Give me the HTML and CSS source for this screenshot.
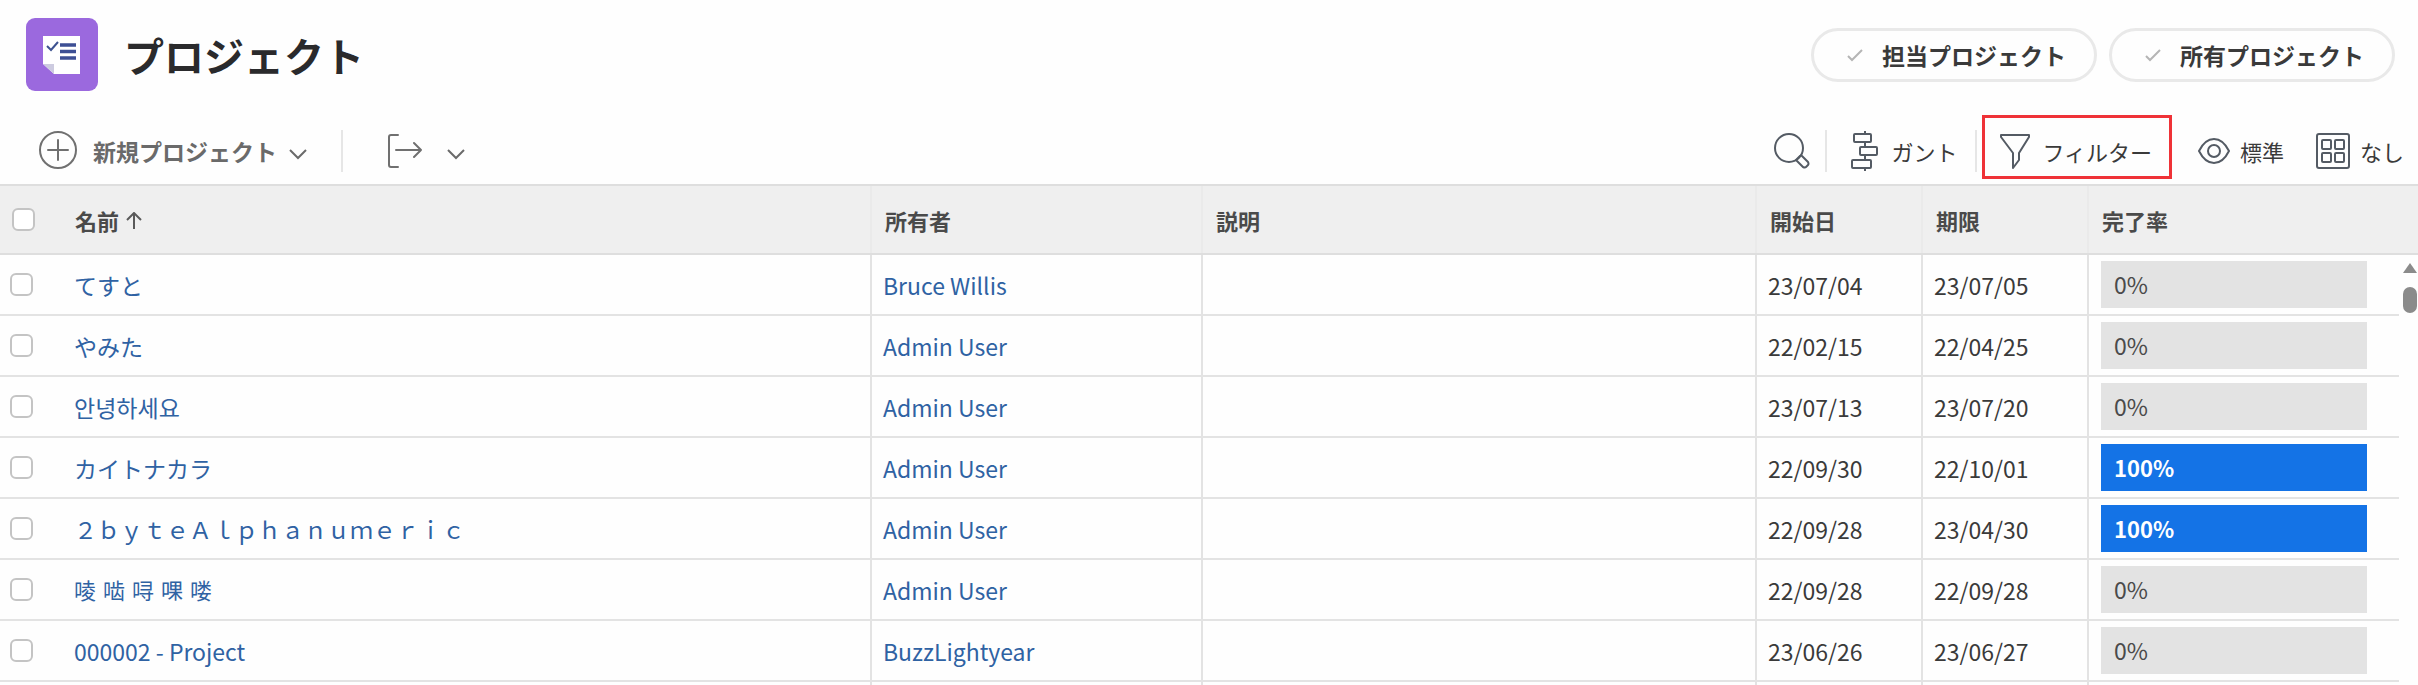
FILE: index.html
```
<!DOCTYPE html>
<html lang="ja">
<head>
<meta charset="utf-8">
<title>プロジェクト</title>
<link rel="stylesheet" href="styles.css">
</head>
<body>
<header class="page-head">
  <svg class="app-icon" viewBox="0 0 72 73" aria-hidden="true">
    <rect width="72" height="73" rx="9" fill="#9b69de"/>
    <path d="M17 18h37v38H28L17 46z" fill="#fff"/>
    <path d="M17 46h11v10z" fill="#cdcbe0"/>
    <path d="M21 28l4 4 7-8" fill="none" stroke="#3d5290" stroke-width="2"/>
    <path d="M34 27h16M34 33.500h16M34 40h16" stroke="#3d4f94" stroke-width="3.500"/>
  </svg>
  <h1 class="title">プロジェクト</h1>
  <div class="pills">
    <button class="pill" type="button"><svg class="tick" viewBox="0 0 16 14"><path d="M1 8l4 4L15 2"/></svg>担当プロジェクト</button>
    <button class="pill" type="button"><svg class="tick" viewBox="0 0 16 14"><path d="M1 8l4 4L15 2"/></svg>所有プロジェクト</button>
  </div>
</header>

<div class="toolbar">
  <button class="tool new" type="button">
    <svg class="icon plus" viewBox="0 0 40 40"><circle cx="20" cy="19" r="18"/><path d="M20 9v20M10 19h20"/></svg>
    新規プロジェクト
    <svg class="chev" viewBox="0 0 20 12"><path d="M2 2l8 8 8-8"/></svg>
  </button>
  <span class="rule"></span>
  <button class="tool export" type="button" aria-label="書き出し">
    <svg class="icon out" viewBox="0 0 36 36"><path d="M12 2H5q-2 0-2 2v28q0 2 2 2h7M10 17h25M28 10l7 7-7 7"/></svg>
    <svg class="chev" viewBox="0 0 20 12"><path d="M2 2l8 8 8-8"/></svg>
  </button>
  <div class="view-tools">
    <button class="tool search" type="button" aria-label="検索">
      <svg class="icon dark" viewBox="0 0 36 36"><circle cx="15" cy="15" r="14"/><path d="M22 27l4-4q1-1 2 0l6 6q1 2 0 3l-2 2q-1 1-3 0l-7-7z"/></svg>
    </button>
    <span class="rule"></span>
    <button class="tool gantt" type="button">
      <svg class="icon dark slim" viewBox="0 0 28 40"><rect x="3" y="3" width="17" height="8" rx="1"/><rect x="9" y="16" width="17" height="8" rx="1"/><rect x="1" y="29" width="19" height="8" rx="1"/><path d="M14 0v3M14 11v5M14 24v5M14 37v3"/></svg>
      ガント
    </button>
    <span class="rule"></span>
    <button class="tool filter" type="button">
      <svg class="icon dark" viewBox="0 0 32 36"><path d="M2 2h28v2L20 20v7l-6 8V20L2 4z"/></svg>
      フィルター
    </button>
    <button class="tool view" type="button">
      <svg class="icon dark" viewBox="0 0 32 28"><path d="M1 14Q7 2 16 2t15 12Q25 26 16 26T1 14z"/><circle cx="16" cy="14" r="6"/></svg>
      標準
    </button>
    <button class="tool group" type="button">
      <svg class="icon dark" viewBox="0 0 34 36"><rect x="1" y="1" width="32" height="34" rx="2"/><rect x="6" y="7" width="9" height="9" rx="1"/><rect x="19" y="7" width="9" height="9" rx="1"/><rect x="6" y="20" width="9" height="9" rx="1"/><rect x="19" y="20" width="9" height="9" rx="1"/></svg>
      なし
    </button>
  </div>
</div>

<table class="grid">
  <colgroup><col class="c-check"><col class="c-name"><col class="c-owner"><col class="c-desc"><col class="c-date"><col class="c-date"><col class="c-done"><col class="c-scroll"></colgroup>
  <thead>
    <tr>
      <th class="check"><input type="checkbox" aria-label="すべて選択"></th>
      <th class="name">名前<svg class="sort" viewBox="0 0 16 18"><path d="M8 17V2M1 8l7-7 7 7"/></svg></th>
      <th>所有者</th><th>説明</th><th>開始日</th><th>期限</th><th class="edge">完了率</th><th class="edge"></th>
    </tr>
  </thead>
  <tbody>
    <tr><td class="check"><input type="checkbox" aria-label="てすと"></td><td class="name"><a href="#">てすと</a></td><td><a href="#">Bruce Willis</a></td><td></td><td>23/07/04</td><td>23/07/05</td><td class="done"><div class="bar">0%</div></td>
      <td class="scroll" rowspan="8"><div class="track"><span class="up"></span><span class="thumb"></span></div></td></tr>
    <tr><td class="check"><input type="checkbox" aria-label="やみた"></td><td class="name"><a href="#">やみた</a></td><td><a href="#">Admin User</a></td><td></td><td>22/02/15</td><td>22/04/25</td><td class="done"><div class="bar">0%</div></td></tr>
    <tr><td class="check"><input type="checkbox" aria-label="안녕하세요"></td><td class="name"><a href="#" lang="ko">안녕하세요</a></td><td><a href="#">Admin User</a></td><td></td><td>23/07/13</td><td>23/07/20</td><td class="done"><div class="bar">0%</div></td></tr>
    <tr><td class="check"><input type="checkbox" aria-label="カイトナカラ"></td><td class="name"><a href="#">カイトナカラ</a></td><td><a href="#">Admin User</a></td><td></td><td>22/09/30</td><td>22/10/01</td><td class="done"><div class="bar full">100%</div></td></tr>
    <tr><td class="check"><input type="checkbox" aria-label="２ｂｙｔｅＡｌｐｈａｎｕｍｅｒｉｃ"></td><td class="name"><a href="#">２ｂｙｔｅＡｌｐｈａｎｕｍｅｒｉｃ</a></td><td><a href="#">Admin User</a></td><td></td><td>22/09/28</td><td>23/04/30</td><td class="done"><div class="bar full">100%</div></td></tr>
    <tr><td class="check"><input type="checkbox" aria-label="㖫 啮 㖊 𠵩 喽"></td><td class="name"><a class="rare" href="#">㖫 啮 㖊 𠵩 喽</a></td><td><a href="#">Admin User</a></td><td></td><td>22/09/28</td><td>22/09/28</td><td class="done"><div class="bar">0%</div></td></tr>
    <tr><td class="check"><input type="checkbox" aria-label="000002 - Project"></td><td class="name"><a href="#">000002 - Project</a></td><td><a href="#">BuzzLightyear</a></td><td></td><td>23/06/26</td><td>23/06/27</td><td class="done"><div class="bar">0%</div></td></tr>
    <tr class="next"><td></td><td></td><td></td><td></td><td></td><td></td><td></td></tr>
  </tbody>
</table>
</body>
</html>
```
FILE: styles.css
```
* { box-sizing: border-box; }

body {
  margin: 0;
  background: #fefefe;
  color: #3a3a3a;
  font: 23px/32px "Noto Sans CJK JP", "Noto Sans CJK KR", "Noto Sans CJK SC", sans-serif;
}

button { font: inherit; color: inherit; background: none; border: 0; padding: 0; white-space: nowrap; }
svg { display: block; flex: none; fill: none; }

.page-head { display: flex; align-items: center; padding: 18px 23px 24px 26px; }
.app-icon { width: 72px; height: 73px; }
.title { margin: 0 0 0 26px; font-size: 40px; line-height: 48px; font-weight: 700; color: #2a2a2c; }

.pills { display: flex; gap: 12px; margin-left: auto; }
.pill {
  display: flex; align-items: center; gap: 19px;
  height: 54px; padding: 0 28px 0 33px;
  border: 3px solid #e9e9e9; border-radius: 27px;
  font-weight: 700;
}
.tick { width: 16px; height: 14px; stroke: #b5b5b5; stroke-width: 2; }

.toolbar { display: flex; align-items: center; height: 69px; padding: 3px 14px 0 38px; }
.tool { display: flex; align-items: center; }
.icon { stroke: #707070; stroke-width: 2; stroke-linejoin: round; stroke-linecap: round; }
.dark { stroke: #545b64; }
.rule { width: 2px; height: 42px; background: #e6e6e6; }
.new { gap: 15px; font-weight: 700; color: #6a6a6a; }
.plus { width: 40px; height: 40px; }
.chev { width: 20px; height: 12px; margin-top: 5px; stroke: #6a6a6a; stroke-width: 2; }
.new .chev { margin-left: -4px; }
.new + .rule { margin: 0 43px 0 33px; }
.out { width: 36px; height: 36px; }
.export { gap: 24px; }

.view-tools { display: flex; align-items: center; margin-left: auto; font-size: 22px; }
.search svg { width: 36px; height: 36px; }
.search + .rule { margin: 0 24px 0 15px; }
.gantt { gap: 12px; margin-right: 18px; }
.slim { width: 28px; height: 40px; }
.filter { position: relative; gap: 11px; margin-left: 22px; }
.filter svg { width: 32px; height: 36px; }
.filter::after {
  content: ""; position: absolute; inset: -18px -20px -10px -17px;
  border: 3px solid #ef3237;
}
.view { gap: 10px; margin: 0 32px 0 46px; }
.view svg { width: 32px; height: 28px; }
.group { gap: 10px; }
.group svg { width: 34px; height: 36px; }

.grid { width: 100%; table-layout: fixed; border-collapse: separate; border-spacing: 0; }
.c-check { width: 60px; }
.c-name { width: 812px; }
.c-owner { width: 331px; }
.c-date { width: 166px; }
.c-done { width: 310px; }
.c-scroll { width: 19px; }

.grid th {
  height: 71px; padding: 0 13px; text-align: left; font-size: 22px; color: #4a4a4a;
  background: #efefef; border: solid #dedede; border-width: 2px 0;
  box-shadow: inset -2px 0 #eaeaea;
}
.grid td { height: 61px; padding: 1px 11px 0; border-bottom: 2px solid #e3e3e3; border-right: 2px solid #e3e3e3; }
.grid .check { padding: 0 0 0 10px; border-right: 0; box-shadow: none; }
.grid th.check { padding-left: 12px; }
.grid .name { padding-left: 14px; }
.grid th.name { padding-left: 15px; }
.grid th.edge { box-shadow: none; }
.grid .done { padding: 0 32px 0 12px; border-right: 0; }
.grid .scroll { padding: 0; border: 0; vertical-align: top; }
.grid .next td { height: 8px; padding: 0; border-bottom: 0; }
.grid .next td:first-child, .grid .next td:nth-child(7) { border-right: 0; }

.grid a { color: #2f62a3; text-decoration: none; }
.grid .rare { font-size: 22px; font-family: "DejaVu Sans", "Noto Sans CJK SC", "Noto Sans CJK TC", sans-serif; }
.sort { display: inline-block; width: 16px; height: 18px; margin-left: 7px; stroke: #5a5a5a; stroke-width: 2; }

input[type="checkbox"] {
  appearance: none; display: block; width: 23px; height: 23px; margin: 0;
  background: #fff; border: 2px solid #c4c4c4; border-radius: 6px;
}

.bar { height: 47px; padding-left: 13px; line-height: 46px; background: #e3e3e3; color: #4a4a4a; }
.bar.full { background: #1473e6; color: #fff; font-size: 22px; font-weight: 700; }

.track { display: flex; flex-direction: column; align-items: center; gap: 14px; padding: 8px 0 0 3px; }
.up { border: solid transparent; border-width: 0 7px 10px; border-bottom-color: #8b8b8b; }
.thumb { width: 14px; height: 26px; border-radius: 7px; background: #8b8b8b; }
```
